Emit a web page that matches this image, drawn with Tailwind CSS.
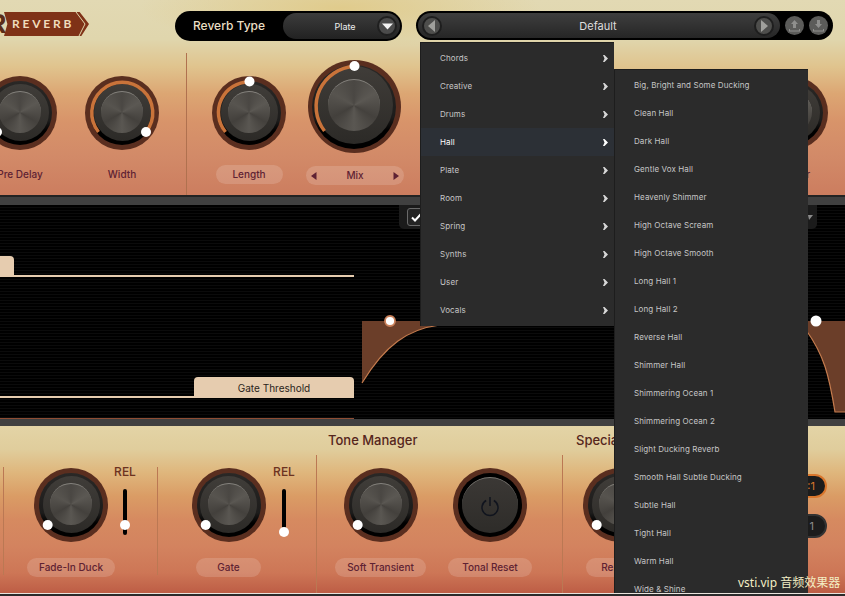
<!DOCTYPE html>
<html lang="en">
<head>
<meta charset="utf-8">
<title>Reverb</title>
<script src="https://cdn.jsdelivr.net/npm/@tailwindcss/browser@4"></script>
</head>
<body class="bg-[#2a2a2a]">
<div class="relative w-[845px] h-[596px] overflow-hidden flex flex-col font-['Inter',sans-serif]">

  <!-- TOP PANEL -->
  <section class="h-[195px] shrink-0 flex flex-col bg-[radial-gradient(ellipse_200px_40px_at_340px_8px,#e0cb8c_0%,#e0cb8c00_100%),linear-gradient(180deg,#e2d9b3_0%,#e0d6ad_20%,#e0c48e_34%,#dca673_48%,#d8946a_62%,#d28a68_80%,#cc7d5f_100%)]">
    <div class="h-[53px] flex items-start pt-[11px] shrink-0">
      <div class="flex items-center w-[175px] h-[26px]">
        <span class="-ml-[13px] w-[17px] text-[27px] leading-[26px] font-bold text-[#5b2c18] font-['Liberation_Sans',sans-serif]">R</span>
        <div class="relative w-[85px] h-[24px] flex items-center pl-[8px] bg-[#7f3217] [clip-path:polygon(0_0,89%_0,100%_50%,91%_100%,0_100%,4%_50%)]">
          <span class="text-[12px] font-bold tracking-[2.8px] text-[#efdcbd] font-['Lato',sans-serif]">REVERB</span>
          <svg class="absolute inset-0" width="85" height="24" viewBox="0 0 85 24"><path d="M72 0L81 12L75 24" fill="none" stroke="#e0d6ad" stroke-width="1"/></svg>
        </div>
      </div>
      <div class="w-[227px] h-[30px] rounded-full bg-black flex items-center pl-[18px] pr-[2px]">
        <span class="w-[90px] text-[12px] font-medium text-[#eadfc4] whitespace-nowrap">Reverb Type</span>
        <div class="ml-auto w-[117px] h-[26px] rounded-full bg-[linear-gradient(180deg,#3c3c3c,#222222)] flex items-center pr-[3px]">
          <span class="w-[94px] pl-[30px] pt-px text-center text-[9px] text-[#eeeeee]">Plate</span>
          <div class="ml-auto w-[20px] h-[20px] rounded-full bg-[#4b4b4b] border-2 border-[#1f1f1f] flex items-center justify-center">
            <svg width="11" height="7" viewBox="0 0 11 7"><polygon points="0,0.5 11,0.5 5.5,6.5" fill="#f4f4f4"/></svg>
          </div>
        </div>
      </div>
      <div class="ml-[14px] w-[417px] h-[29px] rounded-full bg-black flex items-center pl-[2px] pr-[5px]">
        <div class="w-[362px] h-[25px] rounded-full bg-[linear-gradient(180deg,#3e3e3e,#262626)] flex items-center justify-between pl-[4px] pr-[6px]">
          <div class="w-[20px] h-[20px] rounded-full bg-[#4e4e4c] border-2 border-[#1e1e1e] flex items-center justify-center">
            <svg width="8" height="12" viewBox="0 0 8 12"><polygon points="7,0 7,12 0,6" fill="#a0a09c"/></svg>
          </div>
          <span class="pt-[2px] text-[11px] text-[#dedede]">Default</span>
          <div class="w-[20px] h-[20px] rounded-full bg-[#4e4e4c] border-2 border-[#1e1e1e] flex items-center justify-center">
            <svg width="8" height="12" viewBox="0 0 8 12"><polygon points="1,0 1,12 8,6" fill="#a0a09c"/></svg>
          </div>
        </div>
        <div class="ml-[5px] w-[19px] h-[19px] rounded-full bg-[#5c5c5a] flex items-center justify-center">
          <svg width="13" height="13" viewBox="0 0 13 13"><path d="M6.5 1L10 5H8V9H5V5H3ZM1 10H2V11.5H11V10H12V12.5H1Z" fill="#8f8f8d"/></svg>
        </div>
        <div class="ml-[5px] w-[19px] h-[19px] rounded-full bg-[#5c5c5a] flex items-center justify-center">
          <svg width="13" height="13" viewBox="0 0 13 13"><path d="M5 1H8V5H10L6.5 9L3 5H5ZM1 10H2V11.5H11V10H12V12.5H1Z" fill="#8f8f8d"/></svg>
        </div>
      </div>
    </div>

    <div class="flex-1 flex items-stretch">
      <!-- Pre Delay -->
      <div class="-ml-[17px] w-[74px] shrink-0 flex flex-col items-center justify-end pb-[11px]">
        <div class="relative w-[74px] h-[74px] rounded-full bg-[#5a2e1f] flex items-center justify-center shrink-0 mb-[15px]">
          <div class="w-[64px] h-[64px] rounded-full bg-[linear-gradient(180deg,#2a2826_0%,#1d1c1b_62%,#000000_78%)] flex items-center justify-center">
            <div class="mb-[2px] w-[57px] h-[57px] rounded-full bg-[linear-gradient(180deg,#403d39,#2c2a27)] flex items-center justify-center">
              <div class="w-[42px] h-[42px] rounded-full border-t border-[#85827d] bg-[conic-gradient(#4a4743,#5b5853,#44413d,#5a5752,#43403c,#57544f,#4a4743)]"></div>
            </div>
          </div>
          <svg class="absolute inset-0 overflow-visible" width="74" height="74" viewBox="0 0 74 74"><circle cx="14" cy="56" r="5" fill="#fff"/></svg>
        </div>
        <div class="h-[19px] flex items-center text-[10px] font-medium text-[#5e2233] whitespace-nowrap">Pre Delay</div>
      </div>
      <!-- Width -->
      <div class="ml-[28px] w-[74px] shrink-0 flex flex-col items-center justify-end pb-[11px]">
        <div class="relative w-[74px] h-[74px] rounded-full bg-[#5a2e1f] flex items-center justify-center shrink-0 mb-[15px]">
          <div class="w-[64px] h-[64px] rounded-full bg-[linear-gradient(180deg,#2a2826_0%,#1d1c1b_62%,#000000_78%)] flex items-center justify-center">
            <div class="mb-[2px] w-[57px] h-[57px] rounded-full bg-[linear-gradient(180deg,#403d39,#2c2a27)] flex items-center justify-center">
              <div class="w-[42px] h-[42px] rounded-full border-t border-[#85827d] bg-[conic-gradient(#4a4743,#5b5853,#44413d,#5a5752,#43403c,#57544f,#4a4743)]"></div>
            </div>
          </div>
          <svg class="absolute inset-0 overflow-visible" width="74" height="74" viewBox="0 0 74 74"><path d="M13.5 56A30.5 30.5 0 1 1 61 56" fill="none" stroke="#c9733a" stroke-width="3.5"/><circle cx="61" cy="56" r="5" fill="#fff"/></svg>
        </div>
        <div class="h-[19px] flex items-center text-[10px] font-medium text-[#5e2233] whitespace-nowrap">Width</div>
      </div>
      <!-- Divider -->
      <div class="ml-[27px] w-px shrink-0 bg-[#b0714f]"></div>
      <!-- Length -->
      <div class="ml-[25px] w-[74px] shrink-0 flex flex-col items-center justify-end pb-[11px]">
        <div class="relative w-[74px] h-[74px] rounded-full bg-[#5a2e1f] flex items-center justify-center shrink-0 mb-[15px]">
          <div class="w-[64px] h-[64px] rounded-full bg-[linear-gradient(180deg,#2a2826_0%,#1d1c1b_62%,#000000_78%)] flex items-center justify-center">
            <div class="mb-[2px] w-[57px] h-[57px] rounded-full bg-[linear-gradient(180deg,#403d39,#2c2a27)] flex items-center justify-center">
              <div class="w-[42px] h-[42px] rounded-full border-t border-[#85827d] bg-[conic-gradient(#4a4743,#5b5853,#44413d,#5a5752,#43403c,#57544f,#4a4743)]"></div>
            </div>
          </div>
          <svg class="absolute inset-0 overflow-visible" width="74" height="74" viewBox="0 0 74 74"><path d="M13.5 56A30.5 30.5 0 0 1 37.5 6" fill="none" stroke="#c9733a" stroke-width="3.5"/><circle cx="37.5" cy="5.5" r="5" fill="#fff"/></svg>
        </div>
        <div class="w-[67px] h-[19px] rounded-full bg-[#ffffff]/15 flex items-center justify-center text-[10px] font-medium text-[#5e2233]">Length</div>
      </div>
      <!-- Mix -->
      <div class="ml-[20px] w-[98px] shrink-0 flex flex-col items-center justify-end pb-[10px]">
        <div class="relative mr-[2px] w-[93px] h-[93px] rounded-full bg-[#5a2e1f] flex items-center justify-center shrink-0 mb-[13px]">
          <div class="w-[84px] h-[84px] rounded-full bg-[linear-gradient(180deg,#2a2826_0%,#1d1c1b_62%,#000000_78%)] flex items-center justify-center">
            <div class="mb-[3px] w-[78px] h-[78px] rounded-full bg-[linear-gradient(180deg,#403d39,#2c2a27)] flex items-center justify-center">
              <div class="w-[52px] h-[52px] rounded-full border-t border-[#85827d] bg-[conic-gradient(#4a4743,#5b5853,#44413d,#5a5752,#43403c,#57544f,#4a4743)]"></div>
            </div>
          </div>
          <svg class="absolute inset-0 overflow-visible" width="93" height="93" viewBox="0 0 93 93"><path d="M16.5 71A40 40 0 0 1 46.5 6.5" fill="none" stroke="#c9733a" stroke-width="3.5"/><circle cx="46.5" cy="6" r="5" fill="#fff"/></svg>
        </div>
        <div class="w-[98px] h-[19px] rounded-full bg-[#ffffff]/15 flex items-center justify-between px-[5px] text-[10px] font-medium text-[#5e2233]">
          <svg width="6" height="8" viewBox="0 0 6 8"><polygon points="5.5,0 5.5,8 0,4" fill="#5e2233"/></svg>
          <span>Mix</span>
          <svg width="6" height="8" viewBox="0 0 6 8"><polygon points="0.5,0 0.5,8 6,4" fill="#5e2233"/></svg>
        </div>
      </div>
      <!-- Right knob, mostly under the menu -->
      <div class="ml-auto mr-[17px] w-[74px] shrink-0 flex flex-col items-center justify-end pb-[11px]">
        <div class="relative w-[74px] h-[74px] rounded-full bg-[#5a2e1f] flex items-center justify-center shrink-0 mb-[15px]">
          <div class="w-[64px] h-[64px] rounded-full bg-[linear-gradient(180deg,#2a2826_0%,#1d1c1b_62%,#000000_78%)] flex items-center justify-center">
            <div class="mb-[2px] w-[57px] h-[57px] rounded-full bg-[linear-gradient(180deg,#403d39,#2c2a27)] flex items-center justify-center">
              <div class="w-[42px] h-[42px] rounded-full border-t border-[#85827d] bg-[conic-gradient(#4a4743,#5b5853,#44413d,#5a5752,#43403c,#57544f,#4a4743)]"></div>
            </div>
          </div>
        </div>
        <div class="h-[19px] flex items-center text-[10px] font-medium text-[#5e2233] whitespace-nowrap">Diffuser</div>
      </div>
    </div>
  </section>

  <!-- DISPLAY -->
  <section class="h-[231px] shrink-0 flex flex-col">
    <div class="h-[2px] bg-[#232323] shrink-0"></div>
    <div class="h-[8px] bg-[#404040] shrink-0"></div>
    <div class="relative flex-1 bg-[repeating-linear-gradient(180deg,#000000_0px,#000000_2px,#0b0b0b_2px,#0b0b0b_3px)]">
      <!-- threshold one -->
      <div class="absolute left-0 top-[51px] w-[14px] h-[21px] rounded-tr-[4px] bg-[#e6ccaf]"></div>
      <div class="absolute left-0 top-[70px] w-[354px] h-[2px] bg-[#e6ccaf]"></div>
      <!-- gate threshold -->
      <div class="absolute left-0 top-[191px] w-[354px] h-[2px] bg-[#e6ccaf]"></div>
      <div class="absolute left-[194px] top-[172px] w-[160px] h-[21px] rounded-t-[4px] bg-[#e6ccaf] flex items-center justify-center pt-px text-[10px] text-[#2a2420]">Gate Threshold</div>
      <div class="absolute left-0 bottom-0 w-[354px] h-px bg-[#8f4d34]"></div>
      <!-- checkbox tray -->
      <div class="absolute left-[399px] top-0 w-[40px] h-[24px] rounded-b-[5px] bg-[#1b1b1b] flex items-center pl-[8px]">
        <div class="w-[18px] h-[18px] rounded-[3px] border border-[#6a6a6a] bg-[#242424] flex items-center justify-center">
          <svg width="11" height="9" viewBox="0 0 11 9"><path d="M1 4.5L4 7.5L10 1" fill="none" stroke="#fff" stroke-width="2"/></svg>
        </div>
      </div>
      <div class="absolute left-[790px] top-0 w-[27px] h-[24px] rounded-b-[5px] bg-[#1b1b1b]">
        <svg class="absolute left-[18px] top-[10px]" width="5" height="5" viewBox="0 0 5 5"><polygon points="0,0 5,0 1,5" fill="#8a8a8a"/></svg>
      </div>
      <!-- envelope graph -->
      <svg class="absolute left-0 top-0 overflow-visible" width="845" height="214" viewBox="0 0 845 214">
        <path d="M362 116H440V120C408 124 385 140 362 178Z" fill="#6b3e29"/>
        <path d="M362 178C385 140 408 124 440 120" fill="none" stroke="#c67c4e" stroke-width="1.2"/>
        <path d="M800 116H845V207H835C829 170 824 150 806 125Z" fill="#6b3e29"/>
        <path d="M806 125C824 150 829 170 835 207H845" fill="none" stroke="#c67c4e" stroke-width="1.2"/>
        <circle cx="390" cy="116" r="5" fill="#fff" stroke="#c9805a" stroke-width="1.8"/>
        <circle cx="816" cy="116" r="5.5" fill="#fff"/>
      </svg>
    </div>
    <div class="h-[7px] bg-[#404040] shrink-0"></div>
  </section>

  <!-- BOTTOM PANEL -->
  <section class="h-[167px] shrink-0 flex bg-[linear-gradient(180deg,#e3d4a6_0%,#e0cd9c_14%,#dfb67c_28%,#da9c65_42%,#d68a60_56%,#d3835f_72%,#cd7656_88%,#bd5d45_100%)]">
    <!-- Fade-In Duck -->
    <div class="ml-[3px] w-[154px] shrink-0 flex flex-col">
      <div class="h-[41px]"></div>
      <div class="h-[108px] border-l border-[#bb7853] flex items-start pl-[23px] pt-px">
        <div class="w-[88px] flex flex-col items-center">
          <div class="relative w-[74px] h-[74px] rounded-full bg-[#5a2e1f] flex items-center justify-center shrink-0 mb-[16px]">
            <div class="w-[64px] h-[64px] rounded-full bg-[linear-gradient(180deg,#2a2826_0%,#1d1c1b_62%,#000000_78%)] flex items-center justify-center">
              <div class="mb-[2px] w-[57px] h-[57px] rounded-full bg-[linear-gradient(180deg,#403d39,#2c2a27)] flex items-center justify-center">
                <div class="w-[42px] h-[42px] rounded-full border-t border-[#85827d] bg-[conic-gradient(#4a4743,#5b5853,#44413d,#5a5752,#43403c,#57544f,#4a4743)]"></div>
              </div>
            </div>
            <svg class="absolute inset-0 overflow-visible" width="74" height="74" viewBox="0 0 74 74"><circle cx="13.7" cy="57" r="5" fill="#fff"/></svg>
          </div>
          <div class="w-[88px] h-[19px] rounded-full bg-[#ffffff]/15 flex items-center justify-center text-[10px] font-medium text-[#5e2233]">Fade-In Duck</div>
        </div>
        <div class="w-[20px] flex flex-col items-center -mt-[3px]">
          <div class="h-[14px] flex items-center text-[12px] font-medium text-[#6b3220]">REL</div>
          <div class="relative mt-[10px] w-[4px] h-[46px] rounded-full bg-black">
            <div class="absolute -left-[3px] top-[31px] w-[10px] h-[10px] rounded-full bg-white"></div>
          </div>
        </div>
      </div>
    </div>
    <!-- Gate -->
    <div class="w-[159px] shrink-0 flex flex-col">
      <div class="h-[41px]"></div>
      <div class="h-[108px] border-l border-[#bb7853] flex items-start pl-[38px] pt-px">
        <div class="w-[65px] flex flex-col items-center">
          <div class="relative w-[74px] h-[74px] rounded-full bg-[#5a2e1f] flex items-center justify-center shrink-0 mb-[16px]">
            <div class="w-[64px] h-[64px] rounded-full bg-[linear-gradient(180deg,#2a2826_0%,#1d1c1b_62%,#000000_78%)] flex items-center justify-center">
              <div class="mb-[2px] w-[57px] h-[57px] rounded-full bg-[linear-gradient(180deg,#403d39,#2c2a27)] flex items-center justify-center">
                <div class="w-[42px] h-[42px] rounded-full border-t border-[#85827d] bg-[conic-gradient(#4a4743,#5b5853,#44413d,#5a5752,#43403c,#57544f,#4a4743)]"></div>
              </div>
            </div>
            <svg class="absolute inset-0 overflow-visible" width="74" height="74" viewBox="0 0 74 74"><circle cx="13.7" cy="57" r="5" fill="#fff"/></svg>
          </div>
          <div class="w-[65px] h-[19px] rounded-full bg-[#ffffff]/15 flex items-center justify-center text-[10px] font-medium text-[#5e2233]">Gate</div>
        </div>
        <div class="ml-[13px] w-[20px] flex flex-col items-center -mt-[3px]">
          <div class="h-[14px] flex items-center text-[12px] font-medium text-[#6b3220]">REL</div>
          <div class="relative mt-[10px] w-[4px] h-[46px] rounded-full bg-black">
            <div class="absolute -left-[3px] top-[38px] w-[10px] h-[10px] rounded-full bg-white"></div>
          </div>
        </div>
      </div>
    </div>
    <!-- Tone Manager -->
    <div class="w-[246px] shrink-0 flex flex-col">
      <div class="h-[29px] flex items-center pl-[12px] text-[13px] font-medium text-[#55261c]">Tone Manager</div>
      <div class="flex-1 border-l border-[#bb7853] flex items-start pl-[18px] pt-[13px]">
        <div class="w-[91px] flex flex-col items-center">
          <div class="relative w-[74px] h-[74px] rounded-full bg-[#5a2e1f] flex items-center justify-center shrink-0 mb-[16px]">
            <div class="w-[64px] h-[64px] rounded-full bg-[linear-gradient(180deg,#2a2826_0%,#1d1c1b_62%,#000000_78%)] flex items-center justify-center">
              <div class="mb-[2px] w-[57px] h-[57px] rounded-full bg-[linear-gradient(180deg,#403d39,#2c2a27)] flex items-center justify-center">
                <div class="w-[42px] h-[42px] rounded-full border-t border-[#85827d] bg-[conic-gradient(#4a4743,#5b5853,#44413d,#5a5752,#43403c,#57544f,#4a4743)]"></div>
              </div>
            </div>
            <svg class="absolute inset-0 overflow-visible" width="74" height="74" viewBox="0 0 74 74"><circle cx="13.7" cy="57" r="5" fill="#fff"/></svg>
          </div>
          <div class="w-[91px] h-[19px] rounded-full bg-[#ffffff]/15 flex items-center justify-center text-[10px] font-medium text-[#5e2233]">Soft Transient</div>
        </div>
        <div class="ml-[22px] w-[84px] flex flex-col items-center">
          <div class="w-[74px] h-[74px] rounded-full bg-[#5a2e1f] flex items-center justify-center shrink-0 mb-[16px]">
            <div class="w-[64px] h-[64px] rounded-full bg-black flex items-center justify-center">
              <div class="w-[56px] h-[56px] rounded-full border-t border-[#7a7772] bg-[linear-gradient(180deg,#3b3835,#2e2c29)] flex items-center justify-center">
                <svg width="22" height="22" viewBox="0 0 22 22"><path d="M7.2 5.5A8 8 0 1 0 14.8 5.5M11 2V11" fill="none" stroke="#10141e" stroke-width="1.5"/></svg>
              </div>
            </div>
          </div>
          <div class="w-[84px] h-[19px] rounded-full bg-[#ffffff]/15 flex items-center justify-center text-[10px] font-medium text-[#5e2233]">Tonal Reset</div>
        </div>
      </div>
    </div>
    <!-- Special -->
    <div class="flex-1 flex flex-col">
      <div class="h-[29px] flex items-center pl-[14px] text-[13px] font-medium text-[#55261c]">Special</div>
      <div class="flex-1 border-l border-[#bb7853] flex items-start pl-[23px] pt-[13px] pr-[18px]">
        <div class="w-[68px] flex flex-col items-center">
          <div class="relative w-[74px] h-[74px] rounded-full bg-[#5a2e1f] flex items-center justify-center shrink-0 mb-[16px]">
            <div class="w-[64px] h-[64px] rounded-full bg-[linear-gradient(180deg,#2a2826_0%,#1d1c1b_62%,#000000_78%)] flex items-center justify-center">
              <div class="mb-[2px] w-[57px] h-[57px] rounded-full bg-[linear-gradient(180deg,#403d39,#2c2a27)] flex items-center justify-center">
                <div class="w-[42px] h-[42px] rounded-full border-t border-[#85827d] bg-[conic-gradient(#4a4743,#5b5853,#44413d,#5a5752,#43403c,#57544f,#4a4743)]"></div>
              </div>
            </div>
            <svg class="absolute inset-0 overflow-visible" width="74" height="74" viewBox="0 0 74 74"><circle cx="13.7" cy="57" r="5" fill="#fff"/></svg>
          </div>
          <div class="w-[68px] h-[19px] rounded-full bg-[#ffffff]/15 flex items-center justify-center text-[10px] font-medium text-[#5e2233]">Release</div>
        </div>
        <div class="ml-auto pt-[6px] flex flex-col gap-[16px]">
          <div class="w-[44px] h-[24px] rounded-full bg-[#1c1c1c] border-2 border-[#d9762c] flex items-center justify-end pr-[10px] text-[11px] text-[#d9762c]">1:1</div>
          <div class="w-[44px] h-[24px] rounded-full bg-[#1c1c1c] border-2 border-[#333333] flex items-center justify-end pr-[11px] text-[11px] text-[#8c8c8c]">1</div>
        </div>
      </div>
    </div>
  </section>

  <!-- Host window strip -->
  <div class="absolute left-0 right-0 bottom-0 h-[3px] z-30 border-t border-[#e9e3dc] bg-[#2b2b2b]"></div>

  <!-- Category menu -->
  <div class="absolute left-[420px] top-[42px] w-[194px] h-[284px] z-20 pt-px bg-[#2b2b2b] border-t border-l border-[#1d1d1d] text-[8px] tracking-[0.1px] text-[#c6c6c6]">
    <div class="h-[28px] flex items-center justify-between pl-[19px] pr-[6px]"><span>Chords</span><svg width="5" height="7" viewBox="0 0 5 7"><path d="M0 0H1.5L5 3.5L1.5 7H0L1.5 3.5Z" fill="#d8d8d8"/></svg></div>
    <div class="h-[28px] flex items-center justify-between pl-[19px] pr-[6px]"><span>Creative</span><svg width="5" height="7" viewBox="0 0 5 7"><path d="M0 0H1.5L5 3.5L1.5 7H0L1.5 3.5Z" fill="#d8d8d8"/></svg></div>
    <div class="h-[28px] flex items-center justify-between pl-[19px] pr-[6px]"><span>Drums</span><svg width="5" height="7" viewBox="0 0 5 7"><path d="M0 0H1.5L5 3.5L1.5 7H0L1.5 3.5Z" fill="#d8d8d8"/></svg></div>
    <div class="h-[28px] flex items-center justify-between pl-[19px] pr-[6px] bg-[#2c3036] text-white"><span>Hall</span><svg width="5" height="7" viewBox="0 0 5 7"><path d="M0 0H1.5L5 3.5L1.5 7H0L1.5 3.5Z" fill="#ffffff"/></svg></div>
    <div class="h-[28px] flex items-center justify-between pl-[19px] pr-[6px]"><span>Plate</span><svg width="5" height="7" viewBox="0 0 5 7"><path d="M0 0H1.5L5 3.5L1.5 7H0L1.5 3.5Z" fill="#d8d8d8"/></svg></div>
    <div class="h-[28px] flex items-center justify-between pl-[19px] pr-[6px]"><span>Room</span><svg width="5" height="7" viewBox="0 0 5 7"><path d="M0 0H1.5L5 3.5L1.5 7H0L1.5 3.5Z" fill="#d8d8d8"/></svg></div>
    <div class="h-[28px] flex items-center justify-between pl-[19px] pr-[6px]"><span>Spring</span><svg width="5" height="7" viewBox="0 0 5 7"><path d="M0 0H1.5L5 3.5L1.5 7H0L1.5 3.5Z" fill="#d8d8d8"/></svg></div>
    <div class="h-[28px] flex items-center justify-between pl-[19px] pr-[6px]"><span>Synths</span><svg width="5" height="7" viewBox="0 0 5 7"><path d="M0 0H1.5L5 3.5L1.5 7H0L1.5 3.5Z" fill="#d8d8d8"/></svg></div>
    <div class="h-[28px] flex items-center justify-between pl-[19px] pr-[6px]"><span>User</span><svg width="5" height="7" viewBox="0 0 5 7"><path d="M0 0H1.5L5 3.5L1.5 7H0L1.5 3.5Z" fill="#d8d8d8"/></svg></div>
    <div class="h-[28px] flex items-center justify-between pl-[19px] pr-[6px]"><span>Vocals</span><svg width="5" height="7" viewBox="0 0 5 7"><path d="M0 0H1.5L5 3.5L1.5 7H0L1.5 3.5Z" fill="#d8d8d8"/></svg></div>
  </div>

  <!-- Preset menu -->
  <div class="absolute left-[614px] top-[69px] w-[194px] h-[540px] z-20 pt-px pl-[19px] bg-[#2b2b2b] border-t border-l border-[#1d1d1d] text-[8px] tracking-[0.1px] text-[#c6c6c6]">
    <div class="h-[28px] flex items-center">Big, Bright and Some Ducking</div>
    <div class="h-[28px] flex items-center">Clean Hall</div>
    <div class="h-[28px] flex items-center">Dark Hall</div>
    <div class="h-[28px] flex items-center">Gentle Vox Hall</div>
    <div class="h-[28px] flex items-center">Heavenly Shimmer</div>
    <div class="h-[28px] flex items-center">High Octave Scream</div>
    <div class="h-[28px] flex items-center">High Octave Smooth</div>
    <div class="h-[28px] flex items-center">Long Hall 1</div>
    <div class="h-[28px] flex items-center">Long Hall 2</div>
    <div class="h-[28px] flex items-center">Reverse Hall</div>
    <div class="h-[28px] flex items-center">Shimmer Hall</div>
    <div class="h-[28px] flex items-center">Shimmering Ocean 1</div>
    <div class="h-[28px] flex items-center">Shimmering Ocean 2</div>
    <div class="h-[28px] flex items-center">Slight Ducking Reverb</div>
    <div class="h-[28px] flex items-center">Smooth Hall Subtle Ducking</div>
    <div class="h-[28px] flex items-center">Subtle Hall</div>
    <div class="h-[28px] flex items-center">Tight Hall</div>
    <div class="h-[28px] flex items-center">Warm Hall</div>
    <div class="h-[28px] flex items-center">Wide &amp; Shine</div>
  </div>

  <!-- Watermark -->
  <div class="absolute left-[738px] top-[575px] z-40 text-[12px] leading-[16px] whitespace-nowrap text-[#f3eec4] font-['Noto_Sans','Noto_Sans_CJK_SC',sans-serif]">vsti.vip 音频效果器</div>
</div>
</body>
</html>
